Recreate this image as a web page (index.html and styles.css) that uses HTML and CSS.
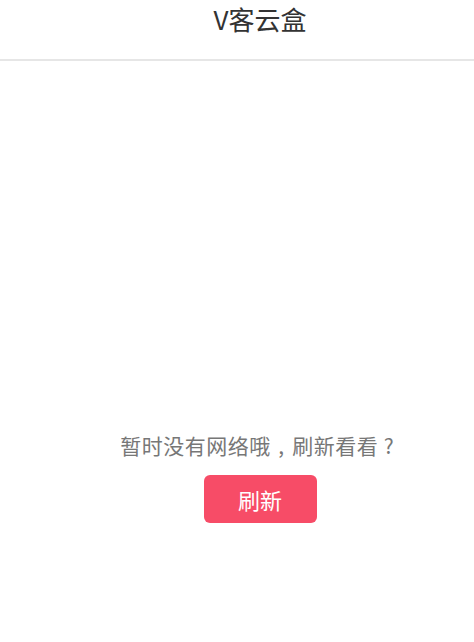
FILE: index.html
```html
<!DOCTYPE html>
<html lang="zh-CN">
<head>
<meta charset="utf-8">
<link rel="stylesheet" href="styles.css">
</head>
<body>
<header class="header"><h1 class="title">V客云盒</h1></header>
<main class="main">
  <p class="msg">暂时没有网络哦<span class="punct">,</span>刷新看看<span class="punct">?</span></p>
  <button class="btn">刷新</button>
</main>
</body>
</html>
```
FILE: styles.css
```css
html, body { margin: 0; padding: 0; background: #fff; }
body {
  font-family: "Noto Sans CJK SC", "Noto Sans", sans-serif;
  width: 474px;
  height: 642px;
  overflow: hidden;
}
.header {
  height: 59px;
  border-bottom: 2px solid #e6e6e6;
  display: flex;
  justify-content: center;
  padding-left: 46px;
}
.title {
  margin: 0;
  margin-top: 1px;
  font-size: 26px;
  font-weight: 400;
  color: #333;
  line-height: 36px;
}
.main {
  display: flex;
  flex-direction: column;
  align-items: center;
  padding-left: 46px;
  padding-top: 369px;
}
.msg {
  margin: 0;
  font-size: 21px;
  line-height: 30px;
  color: #777;
  letter-spacing: 0.5px;
  white-space: nowrap;
}
.punct {
  display: inline-block;
  width: 21px;
  text-align: center;
  letter-spacing: 0;
  margin-right: 0.5px;
}
.btn {
  margin-top: 15px;
  width: 113px;
  height: 48px;
  border: none;
  border-radius: 6px;
  background: #f74c67;
  color: #fff;
  font-family: inherit;
  font-size: 22px;
  padding: 0;
}
```
